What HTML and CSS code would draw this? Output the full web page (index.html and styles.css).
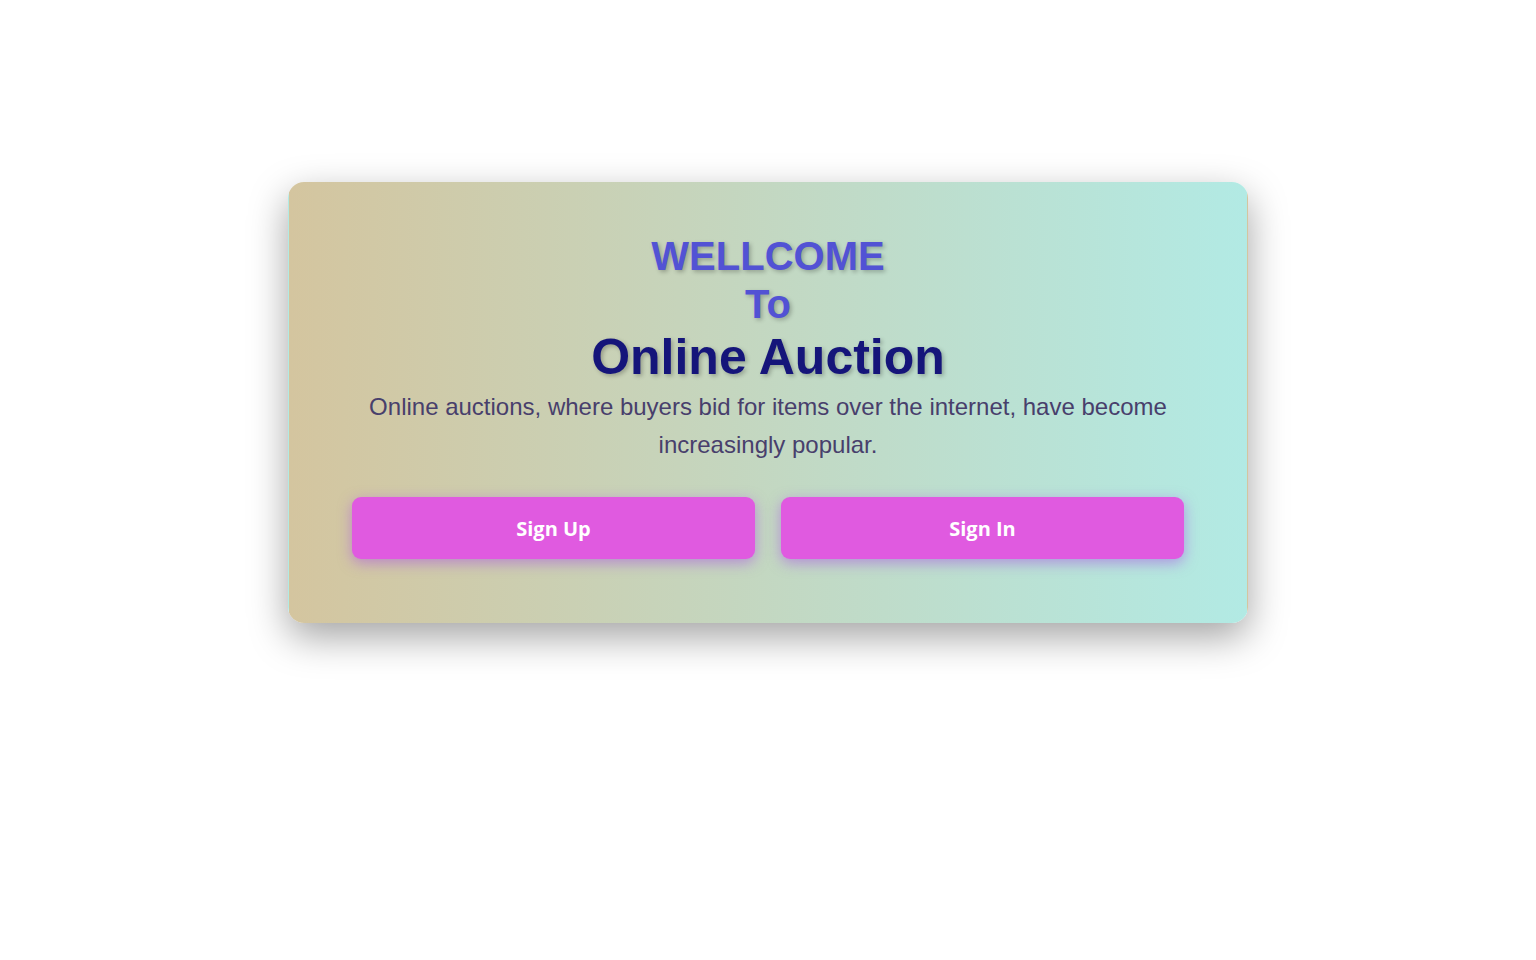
FILE: index.html
```html
<!DOCTYPE html>
<html lang="en">
<head>
<meta charset="utf-8">
<title>Online Auction</title>
<link rel="stylesheet" href="styles.css">
</head>
<body>
<main class="page">
  <section class="card">
    <h1 class="welcome">WELLCOME<br>To</h1>
    <h2 class="title">Online Auction</h2>
    <p class="lead">Online auctions, where buyers bid for items over the internet, have become increasingly popular.</p>
    <div class="actions">
      <button class="btn" type="button">Sign Up</button>
      <button class="btn" type="button">Sign In</button>
    </div>
  </section>
</main>
</body>
</html>
```

FILE: styles.css
```css
* { box-sizing: border-box; }
html, body { margin: 0; padding: 0; background: #fff; }
body { font-family: "Liberation Sans", Arial, sans-serif; }

.page {
  display: flex;
  justify-content: center;
  align-items: flex-start;
  min-height: 100vh;
  padding-top: 182px;
}

.card {
  width: 960px;
  border: 1px solid transparent;
  border-radius: 16px;
  background: linear-gradient(to right, #d4c59f, #b2eae4);
  box-shadow: 0 14px 38px rgba(0, 0, 0, 0.36);
  padding: 49px 63px 63px;
  text-align: center;
}

.welcome {
  margin: 0;
  font-size: 40px;
  line-height: 48px;
  font-weight: 700;
  color: #5252d4;
  text-shadow: 2px 2px 4px rgba(0, 0, 0, 0.25);
}

.title {
  margin: 0;
  font-size: 50px;
  line-height: 58px;
  font-weight: 700;
  color: #15157a;
  text-shadow: 2px 2px 4px rgba(0, 0, 0, 0.25);
}

.lead {
  margin: 2px 0 0;
  font-size: 24px;
  line-height: 38px;
  color: #483f6c;
}

.actions {
  display: grid;
  grid-template-columns: 1fr 1fr;
  gap: 26px;
  margin-top: 33px;
}

.btn {
  height: 62px;
  border: none;
  border-radius: 9px;
  background: #e05ae0;
  color: #fff;
  font-family: "Open Sans", "Noto Sans", sans-serif;
  font-weight: 700;
  font-size: 20px;
  box-shadow: 0 4px 14px rgba(170, 80, 230, 0.55);
  cursor: pointer;
}
```
